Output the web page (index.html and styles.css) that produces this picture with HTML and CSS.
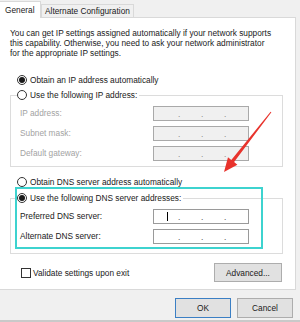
FILE: index.html
```html
<!DOCTYPE html>
<html lang="en">
  <head>
    <meta charset="UTF-8" />
    <meta name="viewport" content="width=device-width, initial-scale=1.0" />
    <title>Internet Protocol Version 4 (TCP/IPv4) Properties</title>
    <link rel="stylesheet" href="styles.css">
  </head>
  <body>
    <div class="dialog">
      <!-- Tabs -->
      <div class="tabs">
        <div class="tab tab-active">General</div>
        <div class="tab">Alternate Configuration</div>
      </div>

      <!-- General tab -->
      <div class="panel">
        <p class="intro">
          You can get IP settings assigned automatically if your network supports<br>
          this capability. Otherwise, you need to ask your network administrator<br>
          for the appropriate IP settings.
        </p>

        <div class="option option-ip"><span class="radio checked"></span>Obtain an IP address automatically</div>

        <fieldset class="group group-ip">
          <legend><span class="radio"></span>Use the following IP address:</legend>
          <div class="field disabled">
            <span>IP address:</span>
            <span class="ip-box"><i>.</i><i>.</i><i>.</i></span>
          </div>
          <div class="field disabled">
            <span>Subnet mask:</span>
            <span class="ip-box"><i>.</i><i>.</i><i>.</i></span>
          </div>
          <div class="field disabled">
            <span>Default gateway:</span>
            <span class="ip-box"><i>.</i><i>.</i><i>.</i></span>
          </div>
        </fieldset>

        <div class="option option-dns"><span class="radio"></span>Obtain DNS server address automatically</div>

        <fieldset class="group group-dns">
          <legend><span class="radio checked"></span>Use the following DNS server addresses:</legend>
          <div class="field">
            <span>Preferred DNS server:</span>
            <span class="ip-box"><b class="caret"></b><i>.</i><i>.</i><i>.</i></span>
          </div>
          <div class="field">
            <span>Alternate DNS server:</span>
            <span class="ip-box"><i>.</i><i>.</i><i>.</i></span>
          </div>
        </fieldset>

        <div class="panel-footer">
          <div class="check"><span class="checkbox"></span>Validate settings upon exit</div>
          <button class="btn btn-advanced">Advanced...</button>
        </div>
      </div>

      <!-- Dialog buttons -->
      <div class="actions">
        <button class="btn btn-default">OK</button>
        <button class="btn">Cancel</button>
      </div>

      <!-- annotation: highlight + arrow -->
      <div class="highlight"></div>
      <svg class="arrow" width="300" height="322" viewBox="0 0 300 322">
        <polygon points="270.6,111.7 231.3,159.9 228,157.3 224,172 237.4,164.7 234.1,162.1 271.4,112.3" fill="#e8332c" />
      </svg>
    </div>
  </body>
</html>
```

FILE: styles.css
```css
* {
  box-sizing: border-box;
  margin: 0;
  padding: 0;
}
body {
  background: #f0f0f0;
  font-family: "Liberation Sans", Arial, sans-serif;
  font-size: 8.3px;
  color: #1a1a1a;
}
.dialog {
  position: relative;
  width: 300px;
  height: 322px;
  border-bottom: 2px solid #c9c9c9;
}
.tabs {
  display: flex;
  align-items: flex-end;
  height: 17px;
}
.tab {
  height: 13px;
  line-height: 12px;
  padding: 0 3px;
  border: 1px solid #d9d9d9;
  border-bottom: none;
  background: #f0f0f0;
  white-space: nowrap;
}
.tab-active {
  position: relative;
  z-index: 1;
  height: 17px;
  line-height: 16px;
  width: 41px;
  padding-left: 5px;
  background: #fff;
  border-left: none;
  margin-bottom: -1px;
}
.panel {
  width: 296px;
  background: #fff;
  border: 1px solid #d9d9d9;
  border-left: none;
  padding: 10px 12px 7px 10px;
}
.intro {
  line-height: 10px;
  white-space: nowrap;
}
.option {
  display: flex;
  align-items: center;
  height: 10px;
  padding-left: 7px;
  white-space: nowrap;
}
.option-ip {
  margin-top: 17px;
}
.option-dns {
  margin-top: 10px;
}
.radio {
  display: inline-flex;
  align-items: center;
  justify-content: center;
  width: 10px;
  height: 10px;
  margin-right: 3px;
  border: 1px solid #333;
  border-radius: 50%;
  background: #fff;
  flex-shrink: 0;
}
.radio.checked::after {
  content: "";
  width: 6px;
  height: 6px;
  border-radius: 50%;
  background: #1a1a1a;
}
.group {
  border: 1px solid #dcdcdc;
  padding: 5px 33px 5px 9px;
  margin: 4px 0 0;
  min-width: 0;
}
.group legend {
  display: flex;
  align-items: center;
  height: 12px;
  padding: 0 2px 0 0;
  margin-left: -3px;
  white-space: nowrap;
}
.group-dns {
  margin-top: 5px;
  padding-bottom: 9px;
}
.field {
  display: flex;
  align-items: center;
  justify-content: space-between;
  height: 15px;
  line-height: 15px;
}
.field + .field {
  margin-top: 5px;
}
.field.disabled {
  color: #a3a3a3;
}
.ip-box {
  position: relative;
  display: flex;
  align-items: center;
  gap: 20px;
  width: 96px;
  height: 15px;
  padding-left: 24px;
  border: 1px solid #9a9a9a;
  background: #fff;
  color: #555;
}
.disabled .ip-box {
  background: #f0f0f0;
  border-color: #a9a9a9;
  color: #888;
}
.ip-box i {
  font-style: normal;
  width: 3px;
  line-height: 10px;
}
.caret {
  position: absolute;
  left: 13px;
  top: 2px;
  width: 1px;
  height: 9px;
  background: #000;
}
.panel-footer {
  display: flex;
  align-items: center;
  justify-content: space-between;
  margin-top: 9px;
  padding: 0 1px 0 11px;
}
.check {
  display: flex;
  align-items: center;
}
.checkbox {
  width: 10px;
  height: 10px;
  margin-right: 2px;
  border: 1px solid #333;
  background: #fff;
}
.btn {
  height: 19px;
  padding: 0 8px;
  font-family: inherit;
  font-size: 8.3px;
  color: #1a1a1a;
  background: #e1e1e1;
  border: 1px solid #adadad;
}
.btn-advanced {
  width: 68px;
}
.actions {
  display: flex;
  justify-content: flex-end;
  gap: 6px;
  margin-top: 8px;
  padding-right: 7px;
}
.actions .btn {
  width: 56px;
  height: 20px;
}
.btn-default {
  border-color: #3b7fc4;
}
.highlight {
  position: absolute;
  left: 15px;
  top: 187px;
  width: 248px;
  height: 62px;
  border: 2px solid #3dd3cf;
}
.arrow {
  position: absolute;
  left: 0;
  top: 0;
  pointer-events: none;
}
```
